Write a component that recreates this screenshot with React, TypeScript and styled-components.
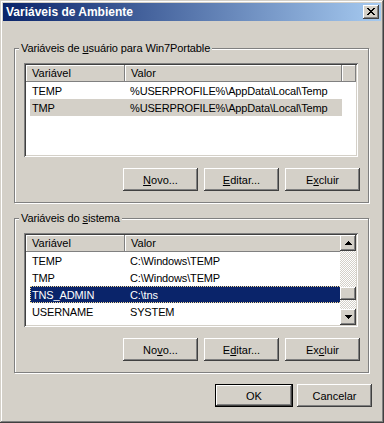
import React from 'react';
import styled, {createGlobalStyle} from 'styled-components';

const GlobalStyle = createGlobalStyle`
  html, body {
    margin: 0;
    padding: 0;
    background: #d4d0c8;
  }
  body {
    font-family: "Liberation Sans", Arial, sans-serif;
    font-size: 11px;
    color: #000;
  }
  * {
    box-sizing: border-box;
  }
`

const Window = styled.div`
  width: 384px;
  height: 423px;
  padding: 3px;
  background: #d4d0c8;
  box-shadow: inset -1px -1px #404040, inset 1px 1px #d4d0c8, inset -2px -2px #808080, inset 2px 2px #fff;
  display: flex;
  flex-direction: column;
`

const TitleBar = styled.div`
  height: 18px;
  padding: 0 2px 0 3px;
  display: flex;
  align-items: center;
  justify-content: space-between;
  background: linear-gradient(to right, #0a246a, #a6caf0);
`

const TitleText = styled.span`
  color: #fff;
  font-weight: bold;
  font-size: 12px;
  line-height: 18px;
`

const Raised = styled.div`
  background: #d4d0c8;
  box-shadow: inset -1px -1px #404040, inset 1px 1px #fff, inset -2px -2px #808080, inset 2px 2px #d4d0c8;
  display: flex;
  align-items: center;
  justify-content: center;
`

const CloseButton = styled(Raised)`
  width: 16px;
  height: 14px;
  padding-bottom: 1px;
`

const Body = styled.div`
  flex: 1;
  display: flex;
  flex-direction: column;
  padding: 27px 12px 0 11px;
`

const GroupBox = styled.div<{ $top?: number }>`
  margin-top: ${p => p.$top ?? 0}px;
  border: 1px solid #808080;
  box-shadow: 1px 1px 0 #fff, inset 1px 1px 0 #fff;
  padding: 0 10px 11px 9px;
  display: flex;
  flex-direction: column;
`

const GroupTitle = styled.div`
  align-self: flex-start;
  margin: -7px 0 8px -5px;
  padding: 0 2px;
  line-height: 13px;
  background: #d4d0c8;
  letter-spacing: -0.1px;
`

const ListBox = styled.div`
  height: 94px;
  padding: 2px;
  background: #fff;
  box-shadow: inset 1px 1px #808080, inset -1px -1px #fff, inset 2px 2px #404040, inset -2px -2px #d4d0c8;
  display: flex;
  overflow: hidden;
`

const ListMain = styled.div`
  flex: 1;
  display: flex;
  flex-direction: column;
  overflow: hidden;
`

const Header = styled.div`
  height: 17px;
  flex: none;
  display: flex;
`

const HeaderCell = styled.div<{ $w?: number }>`
  ${p => (p.$w ? `width: ${p.$w}px;` : 'flex: 1;')}
  flex-shrink: 0;
  padding-left: 6px;
  line-height: 16px;
  background: #d4d0c8;
  box-shadow: inset -1px -1px #808080, inset 1px 1px #fff;
  white-space: nowrap;
`

const Row = styled.div<{ $sel?: 'inactive' | 'active' }>`
  flex: none;
  height: 17px;
  width: 312px;
  margin-left: 4px;
  display: flex;
  line-height: 18px;
  white-space: nowrap;
  letter-spacing: -0.15px;
  background: ${p => (p.$sel === 'active' ? '#0a246a' : p.$sel === 'inactive' ? '#d4d0c8' : 'transparent')};
  color: ${p => (p.$sel === 'active' ? '#fff' : '#000')};
  ${p => (p.$sel === 'active' ? 'outline: 1px dotted #f5db95; outline-offset: -1px;' : '')}
`

const Cell = styled.div<{ $w: number; $pad: number }>`
  width: ${p => p.$w}px;
  padding-left: ${p => p.$pad}px;
  overflow: hidden;
`

const ScrollBar = styled.div`
  width: 16px;
  flex: none;
  display: flex;
  flex-direction: column;
`

const ScrollButton = styled(Raised)`
  width: 16px;
  height: 16px;
  flex: none;
`

const Track = styled.div`
  flex: 1;
  display: flex;
  flex-direction: column;
  background: repeating-conic-gradient(#fff 0 25%, #d4d0c8 0 50%) 0 0 / 2px 2px;
`

const Thumb = styled(Raised)<{ $offset: number }>`
  margin-top: ${p => p.$offset}px;
  height: 13px;
  flex: none;
`

const ButtonRow = styled.div`
  display: flex;
  justify-content: flex-end;
  gap: 6px;
  margin: 11px -2px 0 0;
`

const Button = styled.button<{ $default?: boolean; $w?: number }>`
  width: ${p => p.$w ?? 75}px;
  height: 23px;
  padding: 0;
  font-family: "Liberation Sans", Arial, sans-serif;
  font-size: 11px;
  color: #000;
  background: #d4d0c8;
  border: ${p => (p.$default ? '1px solid #000' : 'none')};
  box-shadow: inset -1px -1px #404040, inset 1px 1px #fff, inset -2px -2px #808080, inset 2px 2px #d4d0c8;

  u {
    text-decoration: underline;
    text-underline-offset: 1px;
  }
`

const Footer = styled.div`
  display: flex;
  justify-content: flex-end;
  gap: 4px;
  margin: 11px -3px 0 0;
`

const CloseGlyph = () => (
    <svg width="8" height="7" viewBox="0 0 8 7">
        <path
            fill="#000"
            d="M0 0h2v1H0z M6 0h2v1H6z M1 1h2v1H1z M5 1h2v1H5z M2 2h4v1H2z M3 3h2v1H3z M2 4h4v1H2z M1 5h2v1H1z M5 5h2v1H5z M0 6h2v1H0z M6 6h2v1H6z"
        />
    </svg>
);

const Arrow = ({down}: { down?: boolean }) => (
    <svg width="7" height="4" viewBox="0 0 7 4" style={down ? {transform: 'scaleY(-1)'} : undefined}>
        <path fill="#000" d="M3 0h1v1H3z M2 1h3v1H2z M1 2h5v1H1z M0 3h7v1H0z"/>
    </svg>
);

type Variable = { name: string; value: string; sel?: 'inactive' | 'active' };

const userVars: Variable[] = [
    {name: 'TEMP', value: '%USERPROFILE%\\AppData\\Local\\Temp'},
    {name: 'TMP', value: '%USERPROFILE%\\AppData\\Local\\Temp', sel: 'inactive'},
];

const systemVars: Variable[] = [
    {name: 'TEMP', value: 'C:\\Windows\\TEMP'},
    {name: 'TMP', value: 'C:\\Windows\\TEMP'},
    {name: 'TNS_ADMIN', value: 'C:\\tns', sel: 'active'},
    {name: 'USERNAME', value: 'SYSTEM'},
    {name: 'windir', value: 'C:\\Windows'},
];

const VarList = ({items, scroll}: { items: Variable[]; scroll?: boolean }) => (
    <ListBox>
        <ListMain>
            <Header>
                <HeaderCell $w={99}>Variável</HeaderCell>
                <HeaderCell $w={217}>Valor</HeaderCell>
                <HeaderCell/>
            </Header>
            {items.map(v => (
                <Row key={v.name} $sel={v.sel}>
                    <Cell $w={95} $pad={2}>{v.name}</Cell>
                    <Cell $w={217} $pad={5}>{v.value}</Cell>
                </Row>
            ))}
        </ListMain>
        {scroll && (
            <ScrollBar>
                <ScrollButton><Arrow/></ScrollButton>
                <Track>
                    <Thumb $offset={36}/>
                </Track>
                <ScrollButton><Arrow down/></ScrollButton>
            </ScrollBar>
        )}
    </ListBox>
);

export default function App() {
    return (
        <>
            <GlobalStyle/>
            <Window>
                <TitleBar>
                    <TitleText>Variáveis de Ambiente</TitleText>
                    <CloseButton><CloseGlyph/></CloseButton>
                </TitleBar>
                <Body>
                    <GroupBox>
                        <GroupTitle>Variáveis de <u>u</u>suário para Win7Portable</GroupTitle>
                        <VarList items={userVars}/>
                        <ButtonRow>
                            <Button><u>N</u>ovo...</Button>
                            <Button><u>E</u>ditar...</Button>
                            <Button>E<u>x</u>cluir</Button>
                        </ButtonRow>
                    </GroupBox>
                    <GroupBox $top={15}>
                        <GroupTitle>Variáveis do <u>s</u>istema</GroupTitle>
                        <VarList items={systemVars} scroll/>
                        <ButtonRow>
                            <Button>No<u>v</u>o...</Button>
                            <Button>E<u>d</u>itar...</Button>
                            <Button>Ex<u>c</u>luir</Button>
                        </ButtonRow>
                    </GroupBox>
                    <Footer>
                        <Button $default $w={78}>OK</Button>
                        <Button>Cancelar</Button>
                    </Footer>
                </Body>
            </Window>
        </>
    );
}
